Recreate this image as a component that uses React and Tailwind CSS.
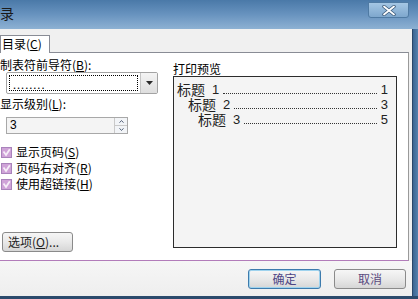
import React from "react";

function Check() {
  return (
    <svg width="11" height="11" viewBox="0 0 11 11" className="shrink-0">
      <rect x="0.5" y="0.5" width="10" height="10" fill="#cfa3d8" stroke="#a983bb" />
      <path d="M2.5 4.5 L5 8 L8.8 2.2" fill="none" stroke="#f6eef8" strokeWidth="1.8" />
    </svg>
  );
}

function Key({ k }) {
  return (
    <span>
      (<span className="underline underline-offset-1">{k}</span>)
    </span>
  );
}

function WinButton({ children, primary, className }) {
  return (
    <button
      className={`h-[20px] rounded-[3px] border ${primary ? "border-[#3d7bad] shadow-[inset_0_0_0_1px_#9fd3ee]" : "border-[#8a8a8a]"} bg-gradient-to-b from-[#f6f6f6] via-[#e9e9e9] to-[#d6d6d6] text-[12px] leading-[16px] ${className}`}
    >
      {children}
    </button>
  );
}

export default function App() {
  const toc = [
    { level: "1", page: "1", indent: "pl-[3px]" },
    { level: "2", page: "3", indent: "pl-[14px]" },
    { level: "3", page: "5", indent: "pl-[24px]" },
  ];

  return (
    <div className="w-[418px] h-[299px] overflow-hidden flex flex-col bg-[#2e5073] font-['Noto_Sans_CJK_SC',sans-serif] text-[12px] text-black">
      {/* title bar */}
      <div className="h-[29px] shrink-0 flex items-start justify-between bg-gradient-to-b from-[#4a79a8] via-[#6893bf] to-[#8db1d3] pr-[9px]">
        <span className="pt-[5px] text-[14px] leading-[16px] text-[#1a1a1a]">录</span>
        <div className="mt-[2px] w-[41px] h-[16px] rounded-b-[3px] border border-[#4f7aa3] bg-gradient-to-b from-[#a4c6e4] to-[#7ea7cd] flex items-center justify-center">
          <svg width="14" height="11" viewBox="0 0 14 11">
            <path d="M2 1.5 L12 9.5 M12 1.5 L2 9.5" stroke="#3a5878" strokeWidth="3.4" strokeLinecap="round" />
            <path d="M2 1.5 L12 9.5 M12 1.5 L2 9.5" stroke="#ffffff" strokeWidth="1.8" strokeLinecap="round" />
          </svg>
        </div>
      </div>

      <div className="flex flex-1 min-h-0">
        {/* client area */}
        <div className="w-[412px] flex flex-col bg-[#f0f0f0]">
          {/* tabs */}
          <div className="h-[23px] shrink-0 flex items-end">
            <div className="relative z-10 mb-[-1px] w-[50px] h-[18px] bg-white border border-b-0 border-[#898c95] pl-[1px] leading-[16px]">
              目录<Key k="C" />
            </div>
          </div>

          {/* tab page */}
          <div className="w-[409px] h-[209px] shrink-0 bg-white border-t border-r border-b border-t-[#898c95] border-r-[#9a9a9a] border-b-[#b27cba] flex">
            {/* left column */}
            <div className="w-[173px] shrink-0 flex flex-col">
              <div className="mt-[5px] h-[14px] leading-[14px]">
                制表符前导符<Key k="B" />:
              </div>
              <div className="ml-[6px] w-[152px] h-[22px] flex border border-[#a3a3a3] rounded-[2px] bg-white">
                <div className="flex-1 m-[2px] border border-dotted border-black flex items-end pl-[3px] leading-[12px] text-[11px] tracking-[1px]">
                  ........
                </div>
                <div className="w-[17px] border-l border-[#c4c4c4] bg-gradient-to-b from-[#f4f4f4] to-[#dedede] flex items-center justify-center">
                  <svg width="7" height="4" viewBox="0 0 7 4">
                    <path d="M0 0 H7 L3.5 4 Z" fill="#2a2a2a" />
                  </svg>
                </div>
              </div>
              <div className="mt-[3px] h-[14px] leading-[14px]">
                显示级别<Key k="L" />:
              </div>
              <div className="mt-[6px] ml-[6px] w-[122px] h-[17px] flex border border-[#a8a8a8] bg-[#f4f4f4]">
                <span className="flex-1 pl-[3px] leading-[15px] font-['Liberation_Sans',sans-serif] text-[12px]">3</span>
                <div className="w-[13px] flex flex-col border-l border-[#c9c9c9]">
                  <div className="flex-1 flex items-center justify-center border-b border-[#c9c9c9] bg-[#f2f4f7]">
                    <svg width="5" height="3" viewBox="0 0 5 3">
                      <path d="M0.5 2.7 L2.5 0.5 L4.5 2.7" fill="none" stroke="#55637a" strokeWidth="1" />
                    </svg>
                  </div>
                  <div className="flex-1 flex items-center justify-center bg-[#f2f4f7]">
                    <svg width="5" height="3" viewBox="0 0 5 3">
                      <path d="M0.5 0.3 L2.5 2.5 L4.5 0.3" fill="none" stroke="#55637a" strokeWidth="1" />
                    </svg>
                  </div>
                </div>
              </div>
              <div className="mt-[10px] flex flex-col">
                {[
                  ["显示页码", "S"],
                  ["页码右对齐", "R"],
                  ["使用超链接", "H"],
                ].map(([label, k]) => (
                  <div key={k} className="h-[16px] flex items-center gap-[4px] pl-[1px] leading-[14px]">
                    <Check />
                    <span>
                      {label}
                      <Key k={k} />
                    </span>
                  </div>
                ))}
              </div>
              <WinButton className="mt-[40px] ml-[2px] w-[71px] h-[18px] text-left pl-[5px] text-[#222]">
                选项<Key k="O" />...
              </WinButton>
            </div>

            {/* right column */}
            <div className="w-[224px] shrink-0 flex flex-col">
              <div className="mt-[9px] h-[14px] leading-[14px]">打印预览</div>
              <div className="h-[172px] border border-[#2c2c2c] bg-[#f4f4f4] pt-[4px] pr-[8px] flex flex-col">
                {toc.map((row) => (
                  <div key={row.level} className={`h-[15px] flex items-end ${row.indent} text-[13px] leading-[13px] text-[#222]`}>
                    <span className="text-[14px] leading-[14px]">标题</span>
                    <span className="ml-[7px] font-['Liberation_Sans',sans-serif]">{row.level}</span>
                    <span className="flex-1 mx-[4px] mb-[2px] border-b border-dotted border-[#333]" />
                    <span className="font-['Liberation_Sans',sans-serif]">{row.page}</span>
                  </div>
                ))}
              </div>
            </div>
          </div>

          {/* dialog buttons */}
          <div className="flex-1 flex items-start justify-end gap-[13px] pt-[8px] pr-[6px] bg-gradient-to-b from-[#f6f6f6] to-[#eeeeee]">
            <WinButton primary className="w-[73px] text-[#4d4585]">确定</WinButton>
            <WinButton className="w-[72px] text-[#5a4a80]">取消</WinButton>
          </div>
        </div>
        {/* right frame */}
        <div className="flex-1 border-l border-[#2a4769] bg-gradient-to-r from-[#3c6592] to-[#5682ad]" />
      </div>
      <div className="h-[3px] shrink-0 bg-[#2b4a6c]" />
    </div>
  );
}
